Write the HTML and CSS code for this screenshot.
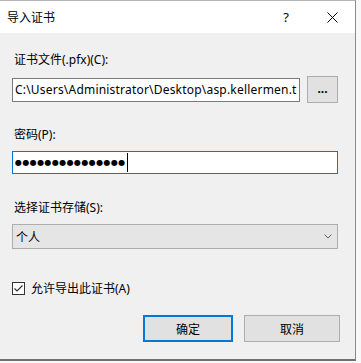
FILE: index.html
```html
<!DOCTYPE html>
<html lang="zh-CN">
<head>
    <meta charset="UTF-8">
    <title>导入证书</title>
    <link rel="stylesheet" href="styles.css">
</head>
<body>
    <div class="dialog">
        <div class="titlebar">
            <span class="title">导入证书</span>
            <span class="caption-btn help">?</span>
            <span class="caption-btn close">
                <svg width="11" height="11" viewBox="0 0 11 11"><path d="M0.5 0.5 L10.5 10.5 M10.5 0.5 L0.5 10.5" stroke="#000" stroke-width="1" fill="none"/></svg>
            </span>
        </div>

        <div class="content">
            <label class="field-label">证书文件(.pfx)(C):</label>
            <div class="file-row">
                <input class="text-box" type="text" value="C:\Users\Administrator\Desktop\asp.kellermen.tc" readonly>
                <button class="btn browse">...</button>
            </div>

            <label class="field-label gap-lg">密码(P):</label>
            <div class="text-box focused">
                <span class="dots">●●●●●●●●●●●●●●●</span><span class="caret"></span>
            </div>

            <label class="field-label gap-xl">选择证书存储(S):</label>
            <div class="combo">
                <span>个人</span>
                <svg width="8" height="5" viewBox="0 0 8 5"><path d="M0.5 0.5 L4 4 L7.5 0.5" stroke="#606060" stroke-width="1" fill="none"/></svg>
            </div>

            <div class="check-row">
                <span class="check-box">
                    <svg width="11" height="11" viewBox="0 0 11 11"><path d="M1.5 5.5 L4 8 L9.5 2.5" stroke="#333" stroke-width="1.2" fill="none"/></svg>
                </span>
                <span>允许导出此证书(A)</span>
            </div>
        </div>

        <div class="footer">
            <button class="btn default">确定</button>
            <button class="btn cancel">取消</button>
        </div>
    </div>
</body>
</html>
```

FILE: styles.css
```css
body {
    margin: 0;
    background: #f8f8f8;
    font-family: "Noto Sans", "Noto Sans CJK SC", sans-serif;
    font-size: 12px;
    color: #000;
}

.dialog {
    width: 355px;
    background: #f0f0f0;
    border-top: 1px solid #b5b5b5;
    border-right: 1px solid #8a8a8a;
    border-bottom: 2px solid #707070;
}

.titlebar {
    height: 32px;
    background: #fff;
    display: flex;
    align-items: center;
}

.title {
    flex: 1;
    padding-left: 7px;
    font-size: 12px;
}

.caption-btn {
    width: 46px;
    height: 32px;
    display: flex;
    align-items: center;
    justify-content: center;
}

.help {
    font-size: 13px;
    padding-left: 1px;
}

.content {
    padding: 19px 17px 0 12px;
    display: flex;
    flex-direction: column;
}

.field-label {
    line-height: 16px;
    height: 16px;
    margin-bottom: 8px;
    padding-left: 2px;
}

.gap-lg {
    margin-top: 24px;
}

.gap-xl {
    margin-top: 26px;
}

.file-row {
    display: flex;
    align-items: center;
    gap: 7px;
}

.text-box {
    box-sizing: border-box;
    height: 24px;
    border: 1px solid #7a7a7a;
    background: #fff;
    font-family: "Noto Sans", "Noto Sans CJK SC", sans-serif;
    font-size: 12px;
    padding: 0 2px;
    display: flex;
    align-items: center;
    margin: 0;
    outline: none;
}

input.text-box {
    width: 289px;
    color: #000;
    letter-spacing: 0.2px;
}

.text-box.focused {
    height: 23px;
    border-color: #0078d7;
}

.dots {
    font-family: "DejaVu Sans", sans-serif;
    font-size: 8px;
    letter-spacing: 0.4px;
    line-height: 1;
}

.caret {
    width: 1px;
    height: 19px;
    background: #000;
    margin-left: 1px;
}

.btn {
    box-sizing: border-box;
    background: #e1e1e1;
    border: 1px solid #adadad;
    font-family: "Noto Sans", "Noto Sans CJK SC", sans-serif;
    font-size: 12px;
    color: #000;
    padding: 0;
}

.browse {
    width: 31px;
    height: 27px;
    font-weight: bold;
    padding-bottom: 3px;
}

.combo {
    box-sizing: border-box;
    height: 25px;
    background: #e5e5e5;
    border: 1px solid #adadad;
    display: flex;
    align-items: center;
    justify-content: space-between;
    padding: 0 5px 0 3px;
    font-size: 12px;
}

.check-row {
    margin-top: 31px;
    height: 16px;
    display: flex;
    align-items: center;
    gap: 6px;
}

.check-box {
    box-sizing: border-box;
    width: 13px;
    height: 13px;
    border: 1px solid #333;
    background: #fff;
    display: flex;
    align-items: center;
    justify-content: center;
}

.footer {
    display: flex;
    justify-content: flex-end;
    gap: 11px;
    padding: 19px 15px 17px 0;
}

.footer .btn {
    height: 27px;
}

.default {
    width: 90px;
    border: 2px solid #0078d7;
}

.cancel {
    width: 96px;
}
```
